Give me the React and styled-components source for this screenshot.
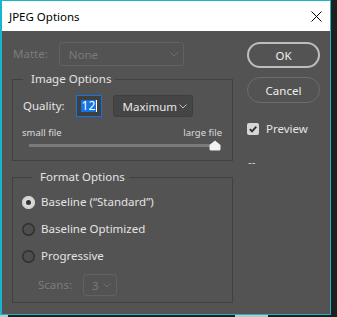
import React from 'react';
import styled, { createGlobalStyle } from 'styled-components';

const Global = createGlobalStyle`
  html, body { margin: 0; padding: 0; background: #1f1f1f; }
  body {
    width: 337px; height: 317px; overflow: hidden;
    font-family: "Noto Sans", "Open Sans", "Liberation Sans", sans-serif;
    font-size: 11.5px;
  }
  * { box-sizing: border-box; }
`;

const Screen = styled.div`
  display: flex;
  flex-direction: column;
  width: 337px;
  height: 317px;
`;

const Window = styled.div`
  width: 331px;
  height: 315px;
  border: 1px solid #19b5cd;
  border-left-width: 2px;
  display: flex;
  flex-direction: column;
  background: #535353;
`;

const TitleBar = styled.div`
  height: 30px;
  flex-shrink: 0;
  background: #ffffff;
  display: flex;
  align-items: center;
  justify-content: space-between;
  padding: 0 8px 0 7px;
  color: #000;
  font-size: 11.5px;
`;

const Body = styled.div`
  flex: 1;
  display: flex;
  gap: 14px;
  padding: 11px 0 0 10px;
`;

const LeftCol = styled.div`
  width: 221px;
  display: flex;
  flex-direction: column;
`;

const RightCol = styled.div`
  width: 73px;
  display: flex;
  flex-direction: column;
`;

const Row = styled.div`
  display: flex;
  align-items: center;
  gap: ${p => p.$gap || 0}px;
  margin-left: ${p => p.$indent || 0}px;
`;

const Label = styled.span`
  color: ${p => (p.$disabled ? '#7c7c7c' : '#e4e4e4')};
  font-size: 11.5px;
  line-height: 16px;
  white-space: nowrap;
  padding-left: ${p => p.$pad || 0}px;
`;

const Dropdown = styled.div`
  width: ${p => p.$w}px;
  height: ${p => p.$h}px;
  border-radius: 3px;
  display: flex;
  align-items: center;
  justify-content: space-between;
  padding: 0 5px 0 ${p => p.$padL || 9}px;
  border: 1px solid ${p => (p.$disabled ? '#616161' : '#3e3e3e')};
  background: ${p => (p.$disabled ? 'transparent' : '#454545')};
  color: ${p => (p.$disabled ? '#7a7a7a' : '#e8e8e8')};
  font-size: 11.5px;
  white-space: nowrap;
`;

const Group = styled.fieldset`
  margin: ${p => p.$mt || 0}px 0 0 0;
  padding: ${p => p.$pt}px ${p => p.$pr || 0}px ${p => p.$pb}px ${p => p.$pl}px;
  border: 1px solid #414141;
  min-width: 0;
  display: flex;
  flex-direction: column;
  gap: ${p => p.$gap || 0}px;
`;

const Legend = styled.legend`
  margin-left: 10px;
  padding: 0 4px 0 8px;
  color: #e4e4e4;
  font-size: 11.5px;
  line-height: 16px;
`;

const NumberInput = styled.div`
  width: 26px;
  height: 22px;
  border: 1px solid #1473e6;
  background: #3f3f3f;
  display: flex;
  align-items: center;
  padding-left: 4px;
`;

const Selected = styled.span`
  background: #1473e6;
  color: #fff;
  font-size: 12px;
  line-height: 12px;
  padding: 0 1px;
  border-right: 1px solid #fff;
`;

const SliderLabels = styled.div`
  display: flex;
  justify-content: space-between;
  margin: 9px 10px 0 9px;
  color: #dcdcdc;
  font-size: 9.5px;
  line-height: 13px;
`;

const SliderTrack = styled.div`
  display: flex;
  align-items: center;
  margin: 1px 11px 0 16px;
  height: 11px;
`;

const TrackLine = styled.div`
  flex: 1;
  height: 3px;
  background: #7b7b7b;
  margin-right: -6px;
`;

const Radio = styled.span`
  width: 13px;
  height: 13px;
  border-radius: 50%;
  flex-shrink: 0;
  display: flex;
  align-items: center;
  justify-content: center;
  background: ${p => (p.$checked ? '#d9d9d9' : '#4e4e4e')};
  box-shadow: inset 0 0 0 1.5px ${p => (p.$checked ? '#cfcfcf' : '#2f2f2f')};
  &::after {
    content: '';
    width: 5px;
    height: 5px;
    border-radius: 50%;
    background: ${p => (p.$checked ? '#323232' : 'transparent')};
  }
`;

const RadioRow = styled.div`
  display: flex;
  align-items: center;
  gap: 6px;
  height: 18px;
`;

const PillButton = styled.div`
  height: 26px;
  border-radius: 13px;
  display: flex;
  align-items: center;
  justify-content: center;
  color: #eeeeee;
  font-size: 11.5px;
  margin-bottom: ${p => p.$mb || 0}px;
  border: ${p => (p.$primary ? '2px solid #bdbdbd' : '1px solid #6c6c6c')};
`;

const CheckRow = styled.div`
  display: flex;
  align-items: center;
  gap: 7px;
  margin-top: 18px;
`;

const CheckBox = styled.span`
  width: 12px;
  height: 12px;
  border-radius: 2px;
  background: #d6d6d6;
  display: flex;
  align-items: center;
  justify-content: center;
`;

const Dash = styled.div`
  color: #d0d0d0;
  font-size: 11.5px;
  line-height: 12px;
  margin: 19px 0 0 1px;
`;

const BottomStrip = styled.div`
  height: 2px;
  display: flex;
`;

const StripSeg = styled.div`
  width: ${p => p.$w}px;
  background: ${p => p.$c};
`;

const Chevron = ({ color }) => (
  <svg width="8" height="5" viewBox="0 0 8 5">
    <path d="M0.5 0.5 L4 4 L7.5 0.5" fill="none" stroke={color} strokeWidth="1" />
  </svg>
);

const CloseIcon = () => (
  <svg width="11" height="11" viewBox="0 0 11 11">
    <path d="M0.5 0.5 L10.5 10.5 M10.5 0.5 L0.5 10.5" stroke="#000" strokeWidth="1" />
  </svg>
);

const Thumb = () => (
  <svg width="12" height="11" viewBox="0 0 12 11">
    <path d="M6 0.5 L11.5 5 L11.5 9 Q11.5 10.5 10 10.5 L2 10.5 Q0.5 10.5 0.5 9 L0.5 5 Z" fill="#f2f2f2" />
  </svg>
);

const Check = () => (
  <svg width="10" height="10" viewBox="0 0 10 10">
    <path d="M1.8 5.2 L4 7.4 L8.3 2.6" fill="none" stroke="#2e2e2e" strokeWidth="1.8" />
  </svg>
);

export default function App() {
  return (
    <>
      <Global />
      <Screen>
        <Window>
          <TitleBar>
            <span>JPEG Options</span>
            <CloseIcon />
          </TitleBar>
          <Body>
            <LeftCol>
              <Row $gap={11}>
                <Label $disabled $pad={1}>Matte:</Label>
                <Dropdown $w={125} $h={24} $disabled>
                  <span>None</span>
                  <Chevron color="#6e6e6e" />
                </Dropdown>
              </Row>
              <Group $mt={5} $pt={8} $pb={9} $pl={0}>
                <Legend>Image Options</Legend>
                <Row $gap={11} $indent={10}>
                  <Label>Quality:</Label>
                  <NumberInput>
                    <Selected>12</Selected>
                  </NumberInput>
                  <Dropdown $w={80} $h={22}>
                    <span>Maximum</span>
                    <Chevron color="#bdbdbd" />
                  </Dropdown>
                </Row>
                <SliderLabels>
                  <span>small file</span>
                  <span>large file</span>
                </SliderLabels>
                <SliderTrack>
                  <TrackLine />
                  <Thumb />
                </SliderTrack>
              </Group>
              <Group $mt={8} $pt={8} $pb={6} $pl={9} $gap={9}>
                <Legend>Format Options</Legend>
                <RadioRow>
                  <Radio $checked />
                  <Label>Baseline (“Standard”)</Label>
                </RadioRow>
                <RadioRow>
                  <Radio />
                  <Label>Baseline Optimized</Label>
                </RadioRow>
                <RadioRow>
                  <Radio />
                  <Label>Progressive</Label>
                </RadioRow>
                <Row $gap={11} $indent={16}>
                  <Label $disabled>Scans:</Label>
                  <Dropdown $w={34} $h={22} $disabled $padL={8}>
                    <span>3</span>
                    <Chevron color="#6e6e6e" />
                  </Dropdown>
                </Row>
              </Group>
            </LeftCol>
            <RightCol>
              <PillButton $primary $mb={9}>OK</PillButton>
              <PillButton>Cancel</PillButton>
              <CheckRow>
                <CheckBox><Check /></CheckBox>
                <Label>Preview</Label>
              </CheckRow>
              <Dash>--</Dash>
            </RightCol>
          </Body>
        </Window>
        <BottomStrip>
          <StripSeg $w={8} $c="#b9c9cc" />
          <StripSeg $w={227} $c="#1f1f1f" />
          <StripSeg $w={33} $c="#c4c4c4" />
          <StripSeg $w={69} $c="#1f1f1f" />
        </BottomStrip>
      </Screen>
    </>
  );
}
